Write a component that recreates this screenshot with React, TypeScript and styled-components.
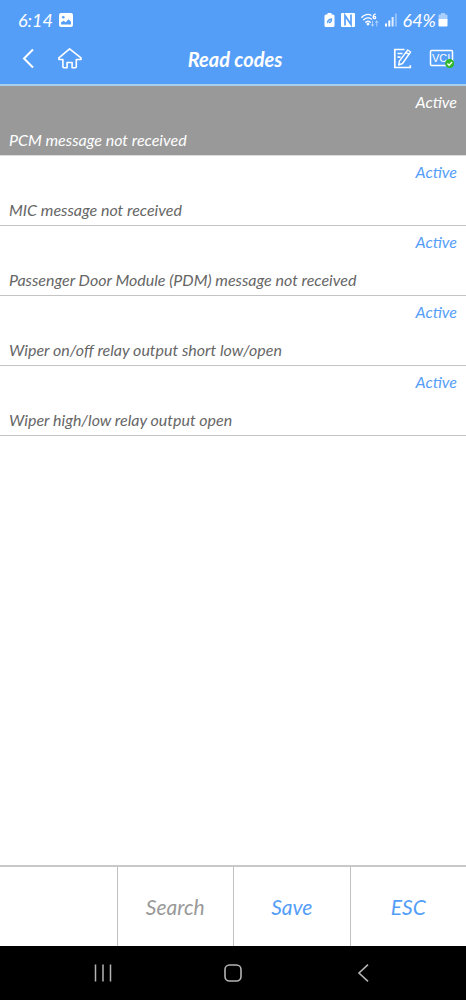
import React, { useState } from "react";
import styled, { createGlobalStyle } from "styled-components";

const BLUE = "#559ef8";

const GlobalStyle = createGlobalStyle`
  *, *::before, *::after { box-sizing: border-box; }
  body {
    margin: 0;
    background: #fff;
    font-family: Lato, "Open Sans", sans-serif;
    font-style: italic;
  }
  button { font: inherit; border: 0; padding: 0; background: none; cursor: pointer; }
  svg { display: block; flex: none; }
`;

const Screen = styled.div`
  min-height: 100vh;
  display: flex;
  flex-direction: column;
`;

const Header = styled.header`
  background: ${BLUE};
  color: #fff;
  padding-bottom: 6px;
  border-bottom: 2px solid #a9cfee;
`;

const StatusBar = styled.div`
  height: 40px;
  padding: 0 18px;
  display: flex;
  align-items: center;
  justify-content: space-between;
  font-size: 18px;
  line-height: 20px;
`;

const StatusGroup = styled.div`
  display: flex;
  align-items: center;
  gap: 6px;
`;

const BatteryLevel = styled.span`
  display: flex;
  align-items: center;
  gap: 2px;
`;

const TitleBar = styled.div`
  height: 38px;
  padding: 0 12px 0 16px;
  display: grid;
  grid-template-columns: 1fr auto 1fr;
  align-items: center;
`;

const Title = styled.h1`
  margin: 0;
  font-size: 20px;
  line-height: 24px;
  font-weight: 700;
`;

const Actions = styled.div<{ $end?: boolean }>`
  display: flex;
  gap: ${(p) => (p.$end ? 16 : 18)}px;
  justify-content: ${(p) => (p.$end ? "flex-end" : "flex-start")};
`;

const IconButton = styled.button`
  color: #fff;
`;

const CodeList = styled.ul`
  flex: 1;
  margin: 0;
  padding: 0;
  list-style: none;
`;

const CodeRow = styled.button<{ $selected: boolean }>`
  width: 100%;
  padding: 6px 9px 5px;
  display: flex;
  flex-direction: column;
  gap: 18px;
  text-align: left;
  font-size: 16px;
  line-height: 20px;
  color: ${(p) => (p.$selected ? "#fff" : "#666")};
  background: ${(p) => (p.$selected ? "#999" : "#fff")};
  border-bottom: 1px solid ${(p) => (p.$selected ? "#ddd" : "#c4c4c4")};
`;

const CodeState = styled.span<{ $selected: boolean }>`
  align-self: flex-end;
  color: ${(p) => (p.$selected ? "#fff" : BLUE)};
`;

const Toolbar = styled.footer`
  display: grid;
  grid-template-columns: repeat(4, 1fr);
  border-top: 2px solid #c8c8c8;
`;

const ToolCell = styled.div`
  height: 79px;
  display: grid;
  border-left: 1px solid #c0c0c0;
  &:first-child { border-left: 0; }
`;

const ToolButton = styled.button`
  font-size: 21px;
  line-height: 24px;
  color: ${BLUE};
  &:disabled { color: #999; cursor: default; }
`;

const SystemNav = styled.nav`
  height: 54px;
  padding: 0 38px;
  background: #000;
  display: grid;
  grid-template-columns: repeat(3, 1fr);
  align-items: center;
`;

const NavButton = styled.button`
  height: 54px;
  display: flex;
  align-items: center;
  justify-content: center;
  color: #b4b4b4;
`;

const codes = [
  "PCM message not received",
  "MIC message not received",
  "Passenger Door Module (PDM) message not received",
  "Wiper on/off relay output short low/open",
  "Wiper high/low relay output open",
];

const PictureIcon = () => (
  <svg width="14" height="14" viewBox="0 0 14 14">
    <rect width="14" height="14" rx="2" fill="#fff" />
    <circle cx="4.3" cy="4.2" r="1.3" fill={BLUE} />
    <path d="M2 11.500V9.500l2.500-1.700 2.300 1.400 2.700-3 2.500 2.600v2.700z" fill={BLUE} />
  </svg>
);

const BatterySaverIcon = () => (
  <svg width="11" height="14" viewBox="0 0 11 14">
    <path d="M3.500 0h4v1.500H9A1.500 1.500 0 0 1 10.500 3v9.500A1.500 1.500 0 0 1 9 14H2A1.500 1.500 0 0 1 .5 12.500V3A1.500 1.500 0 0 1 2 1.500h1.500z" fill="#fff" />
    <path d="M3 10.700C2.300 7.500 4.500 5.300 8.200 5.200 8.500 9 6.200 10.700 4 10" fill={BLUE} />
    <path d="M3.300 10.500 6.500 7" stroke="#fff" strokeWidth=".8" />
  </svg>
);

const NfcIcon = () => (
  <svg width="14" height="14" viewBox="0 0 14 14">
    <rect width="14" height="14" rx="1" fill="#fff" />
    <path d="M4 12.500V2.500L10 11.500V1.500" fill="none" stroke={BLUE} strokeWidth="1.700" />
  </svg>
);

const WifiIcon = () => (
  <svg width="18" height="14" viewBox="0 0 18 14" fill="none" stroke="#fff" strokeWidth="1.300" strokeLinecap="round">
    <path d="M.8 4.300C3.500 1.200 7.500.8 10 2.200M2.700 6.800C4.800 4.500 8.200 4.300 10.400 6M4.800 9.200c1.300-1.400 3.200-1.400 4.500 0" />
    <circle cx="7" cy="11" r=".8" fill="#fff" />
    <path d="M14.300 1.200c-1.700.3-2.300 1.800-2 3.500" />
    <circle cx="13.500" cy="4.500" r="1.200" />
    <path d="M11.500 8v5m-1.200-1.500 1.200 1.500 1.200-1.500M15.700 13V8m-1.200 1.500L15.700 8l1.200 1.500" opacity=".5" strokeWidth="1" />
  </svg>
);

const SignalIcon = () => (
  <svg width="12" height="14" viewBox="0 0 12 14" fill="#fff">
    <rect y="10.500" width="2" height="3" />
    <rect x="3.300" y="7.500" width="2" height="6" />
    <rect x="6.600" y="4" width="2" height="9.500" opacity=".8" />
    <rect x="9.900" y=".5" width="2" height="13" opacity=".35" />
  </svg>
);

const BatteryIcon = () => (
  <svg width="10" height="14" viewBox="0 0 10 14">
    <path d="M3 0h4v1.500H8.500A1 1 0 0 1 9.500 2.500V6H.5V2.500A1 1 0 0 1 1.500 1.500H3z" fill="#fff" opacity=".5" />
    <path d="M.5 6h9v6.500A1 1 0 0 1 8.500 13.500h-7A1 1 0 0 1 .5 12.500z" fill="#fff" />
  </svg>
);

const BackIcon = () => (
  <svg width="24" height="24" viewBox="0 0 24 24" fill="none" stroke="currentColor" strokeWidth="2">
    <path d="M17 2.500 8 11.500l9 9" />
  </svg>
);

const HomeIcon = () => (
  <svg width="24" height="24" viewBox="0 0 24 24" fill="none" stroke="currentColor" strokeWidth="1.600" strokeLinejoin="round">
    <path d="M11.600 1.800 .9 10.800v1.700h4v7.300a1 1 0 0 0 1 1h3.200v-5.300h5v5.300h3.200a1 1 0 0 0 1-1v-7.300H23v-1.700z" />
  </svg>
);

const EditIcon = () => (
  <svg width="20" height="24" viewBox="0 0 20 24" fill="none" stroke="currentColor" strokeWidth="1.700">
    <path d="M12.500 2.500H2.800v18h15.500v-2.300M5.500 6.500h5M5.500 10.200h3" />
    <path d="M15.700 3 18.600 5 10.500 16.500 6.700 18l.7-3.800zM14 5.400l2.900 2" strokeWidth="1.400" strokeLinejoin="round" />
  </svg>
);

const VciIcon = () => (
  <svg width="26" height="24" viewBox="0 0 26 24">
    <rect x="2.500" y="3.500" width="22" height="15" rx="1" fill="none" stroke="#fff" strokeWidth="1.500" />
    <text x="4" y="15" fill="#fff" fontSize="11" fontStyle="normal" fontFamily="Liberation Sans, sans-serif">VCI</text>
    <circle cx="21.700" cy="16.500" r="4.500" fill="#2fb82b" />
    <path d="m19.400 16.500 1.700 1.700 3-3.200" fill="none" stroke="#fff" strokeWidth="1.300" />
  </svg>
);

const RecentsIcon = () => (
  <svg width="18" height="18" viewBox="0 0 18 18" stroke="currentColor" strokeWidth="1.500">
    <path d="M1.500.5v17M9 .5v17M16.500.5v17" />
  </svg>
);

const SystemHomeIcon = () => (
  <svg width="18" height="18" viewBox="0 0 18 18" fill="none" stroke="currentColor" strokeWidth="1.600">
    <rect x="1" y="1" width="16" height="16" rx="4.500" />
  </svg>
);

const SystemBackIcon = () => (
  <svg width="18" height="18" viewBox="0 0 18 18" fill="none" stroke="currentColor" strokeWidth="1.600">
    <path d="M14 .7 5 9l9 8.300" />
  </svg>
);

export default function App() {
  const [selected, setSelected] = useState(0);

  return (
    <>
      <GlobalStyle />
      <Screen>
        <Header>
          <StatusBar>
            <StatusGroup>
              <span>6:14</span>
              <PictureIcon />
            </StatusGroup>
            <StatusGroup>
              <BatterySaverIcon />
              <NfcIcon />
              <WifiIcon />
              <SignalIcon />
              <BatteryLevel>
                64%
                <BatteryIcon />
              </BatteryLevel>
            </StatusGroup>
          </StatusBar>
          <TitleBar>
            <Actions>
              <IconButton aria-label="Back"><BackIcon /></IconButton>
              <IconButton aria-label="Home"><HomeIcon /></IconButton>
            </Actions>
            <Title>Read codes</Title>
            <Actions $end>
              <IconButton aria-label="Edit"><EditIcon /></IconButton>
              <IconButton aria-label="VCI connected"><VciIcon /></IconButton>
            </Actions>
          </TitleBar>
        </Header>
        <CodeList>
          {codes.map((code, i) => (
            <li key={code}>
              <CodeRow $selected={i === selected} onClick={() => setSelected(i)}>
                <CodeState $selected={i === selected}>Active</CodeState>
                <span>{code}</span>
              </CodeRow>
            </li>
          ))}
        </CodeList>
        <Toolbar>
          <ToolCell />
          <ToolCell><ToolButton disabled>Search</ToolButton></ToolCell>
          <ToolCell><ToolButton>Save</ToolButton></ToolCell>
          <ToolCell><ToolButton>ESC</ToolButton></ToolCell>
        </Toolbar>
        <SystemNav aria-label="System">
          <NavButton aria-label="Recent apps"><RecentsIcon /></NavButton>
          <NavButton aria-label="Home screen"><SystemHomeIcon /></NavButton>
          <NavButton aria-label="System back"><SystemBackIcon /></NavButton>
        </SystemNav>
      </Screen>
    </>
  );
}
